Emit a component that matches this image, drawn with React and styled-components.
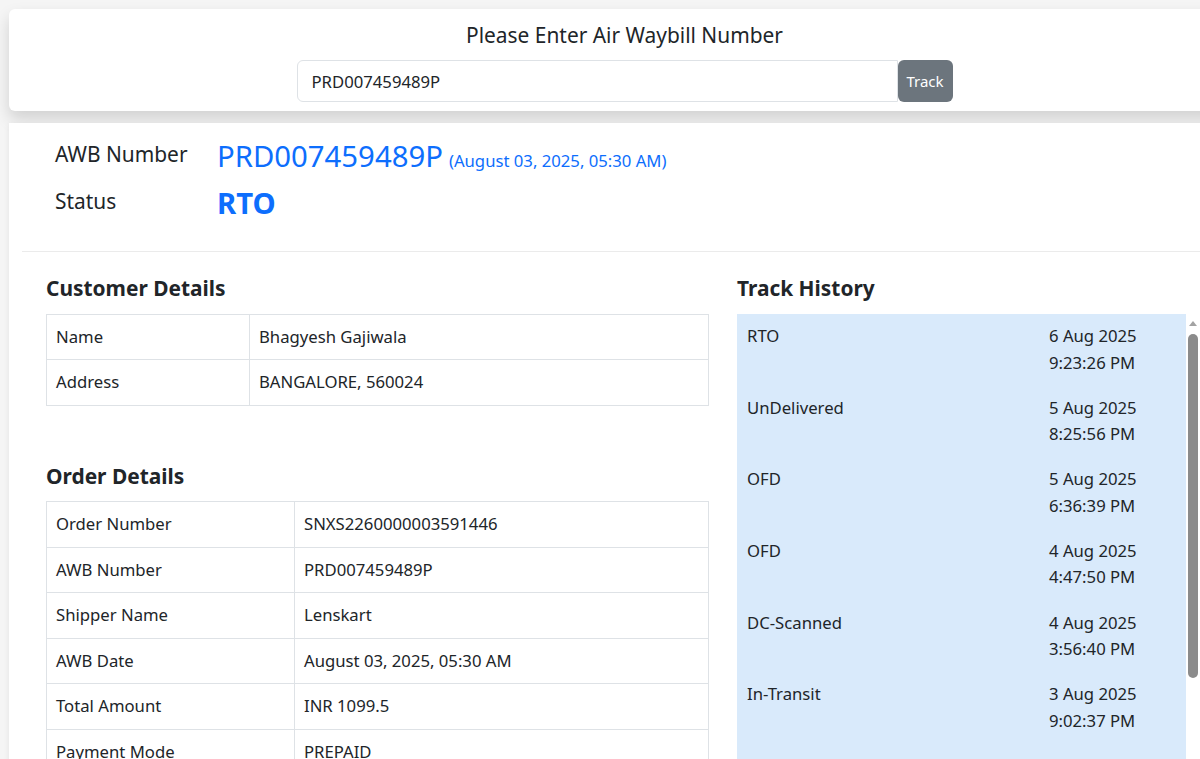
import React from "react";
import styled, { createGlobalStyle } from "styled-components";

const Global = createGlobalStyle`
  html, body { margin: 0; padding: 0; overflow: hidden; }
  body {
    background: #f5f5f5;
    font-family: "Noto Sans", "Open Sans", sans-serif;
    color: #212529;
    font-size: 16.7px;
    line-height: 26.4px;
  }
  * { box-sizing: border-box; }
`;

const Page = styled.div`
  width: 1249px;
  padding: 9px;
  display: flex;
  flex-direction: column;
  gap: 12px;
`;

const SearchCard = styled.div`
  background: #fff;
  border-radius: 6px;
  box-shadow: 0 8px 16px rgba(0, 0, 0, 0.15);
  padding: 13px 0 9px;
  display: flex;
  flex-direction: column;
  align-items: center;
  gap: 12px;
`;

const SearchTitle = styled.h5`
  margin: 0;
  font-size: 20.9px;
  font-weight: 400;
  line-height: 26.4px;
`;

const SearchRow = styled.div`
  display: flex;
  height: 42px;
`;

const AwbInput = styled.input`
  width: 601px;
  height: 42px;
  border: 1px solid #dee2e6;
  border-radius: 6px 0 0 6px;
  padding: 0 14px;
  font: inherit;
  font-size: 16.7px;
  color: #212529;
  outline: none;
`;

const TrackButton = styled.button`
  width: 55px;
  height: 42px;
  border: none;
  border-radius: 6px;
  background: #6c757d;
  color: #fff;
  font: inherit;
  font-size: 15px;
  padding: 0;
`;

const ResultCard = styled.div`
  background: #fff;
  box-shadow: 0 2px 6px rgba(0, 0, 0, 0.08);
  padding: 0 13px;
`;

const Summary = styled.div`
  padding: 15px 33px 19px;
  display: grid;
  grid-template-columns: 162px 1fr;
  grid-auto-rows: 47px;
  align-items: start;
`;

const SummaryLabel = styled.h5`
  margin: 3px 0 0;
  font-size: 20.9px;
  font-weight: 400;
  line-height: 26.4px;
`;

const SummaryValue = styled.h3`
  margin: 0;
  font-size: 29.3px;
  line-height: 37px;
  color: #0d6efd;
  font-weight: ${(p) => (p.$bold ? 700 : 400)};
  display: flex;
  align-items: baseline;
  gap: 6px;
`;

const SmallDate = styled.small`
  font-size: 16.7px;
  font-weight: 400;
`;

const Divider = styled.hr`
  margin: 0;
  border: none;
  border-top: 1px solid #ebebeb;
`;

const Body = styled.div`
  padding: 23px 24px 0;
  display: grid;
  grid-template-columns: 663px 463px;
  column-gap: 28px;
  align-items: start;
`;

const Column = styled.div`
  display: flex;
  flex-direction: column;
`;

const SectionTitle = styled.h5`
  margin: 0 0 12px;
  font-size: 20.9px;
  font-weight: 700;
  line-height: 26.4px;
`;

const Table = styled.table`
  width: 100%;
  border-collapse: collapse;
  margin-bottom: ${(p) => p.$mb || 0}px;
`;

const Cell = styled.td`
  border: 1px solid #dee2e6;
  padding: 9.05px 9px;
  line-height: 26.4px;
  width: ${(p) => p.$w || "auto"};
`;

const HistoryBox = styled.div`
  display: flex;
  height: 520px;
  background: #fff;
`;

const HistoryList = styled.div`
  flex: 1;
  background: #d9eafb;
  overflow: hidden;
`;

const HistoryItem = styled.div`
  display: grid;
  grid-template-columns: 1fr 137px;
  padding: 9.4px 0 9.4px 10px;
  line-height: 26.4px;
`;

const Rail = styled.div`
  width: 14px;
  background: #fff;
  display: flex;
  flex-direction: column;
  align-items: center;
  padding-top: 7px;
`;

const RailArrow = styled.div`
  width: 0;
  height: 0;
  border-left: 4.5px solid transparent;
  border-right: 4.5px solid transparent;
  border-bottom: 5px solid #a3a3a3;
`;

const RailThumb = styled.div`
  margin-top: 8px;
  width: 10px;
  height: 344px;
  border-radius: 5px;
  background: #8b8b8b;
`;

const customer = [
  ["Name", "Bhagyesh Gajiwala"],
  ["Address", "BANGALORE, 560024"],
];

const order = [
  ["Order Number", "SNXS2260000003591446"],
  ["AWB Number", "PRD007459489P"],
  ["Shipper Name", "Lenskart"],
  ["AWB Date", "August 03, 2025, 05:30 AM"],
  ["Total Amount", "INR 1099.5"],
  ["Payment Mode", "PREPAID"],
];

const history = [
  ["RTO", "6 Aug 2025", "9:23:26 PM"],
  ["UnDelivered", "5 Aug 2025", "8:25:56 PM"],
  ["OFD", "5 Aug 2025", "6:36:39 PM"],
  ["OFD", "4 Aug 2025", "4:47:50 PM"],
  ["DC-Scanned", "4 Aug 2025", "3:56:40 PM"],
  ["In-Transit", "3 Aug 2025", "9:02:37 PM"],
  ["In-Transit", "3 Aug 2025", "6:10:12 PM"],
  ["Picked Up", "3 Aug 2025", "2:41:05 PM"],
];

export default function App() {
  return (
    <>
      <Global />
      <Page>
        <SearchCard>
          <SearchTitle>Please Enter Air Waybill Number</SearchTitle>
          <SearchRow>
            <AwbInput defaultValue="PRD007459489P" />
            <TrackButton>Track</TrackButton>
          </SearchRow>
        </SearchCard>
        <ResultCard>
          <Summary>
            <SummaryLabel>AWB Number</SummaryLabel>
            <SummaryValue>
              PRD007459489P <SmallDate>(August 03, 2025, 05:30 AM)</SmallDate>
            </SummaryValue>
            <SummaryLabel>Status</SummaryLabel>
            <SummaryValue $bold>RTO</SummaryValue>
          </Summary>
          <Divider />
          <Body>
            <Column>
              <SectionTitle>Customer Details</SectionTitle>
              <Table $mb={57}>
                <tbody>
                  {customer.map(([k, v]) => (
                    <tr key={k}>
                      <Cell $w="203px">{k}</Cell>
                      <Cell>{v}</Cell>
                    </tr>
                  ))}
                </tbody>
              </Table>
              <SectionTitle>Order Details</SectionTitle>
              <Table>
                <tbody>
                  {order.map(([k, v]) => (
                    <tr key={k}>
                      <Cell $w="248px">{k}</Cell>
                      <Cell>{v}</Cell>
                    </tr>
                  ))}
                </tbody>
              </Table>
            </Column>
            <Column>
              <SectionTitle>Track History</SectionTitle>
              <HistoryBox>
                <HistoryList>
                  {history.map(([s, d, t], i) => (
                    <HistoryItem key={i}>
                      <span>{s}</span>
                      <span>
                        {d}
                        <br />
                        {t}
                      </span>
                    </HistoryItem>
                  ))}
                </HistoryList>
                <Rail>
                  <RailArrow />
                  <RailThumb />
                </Rail>
              </HistoryBox>
            </Column>
          </Body>
        </ResultCard>
      </Page>
    </>
  );
}
